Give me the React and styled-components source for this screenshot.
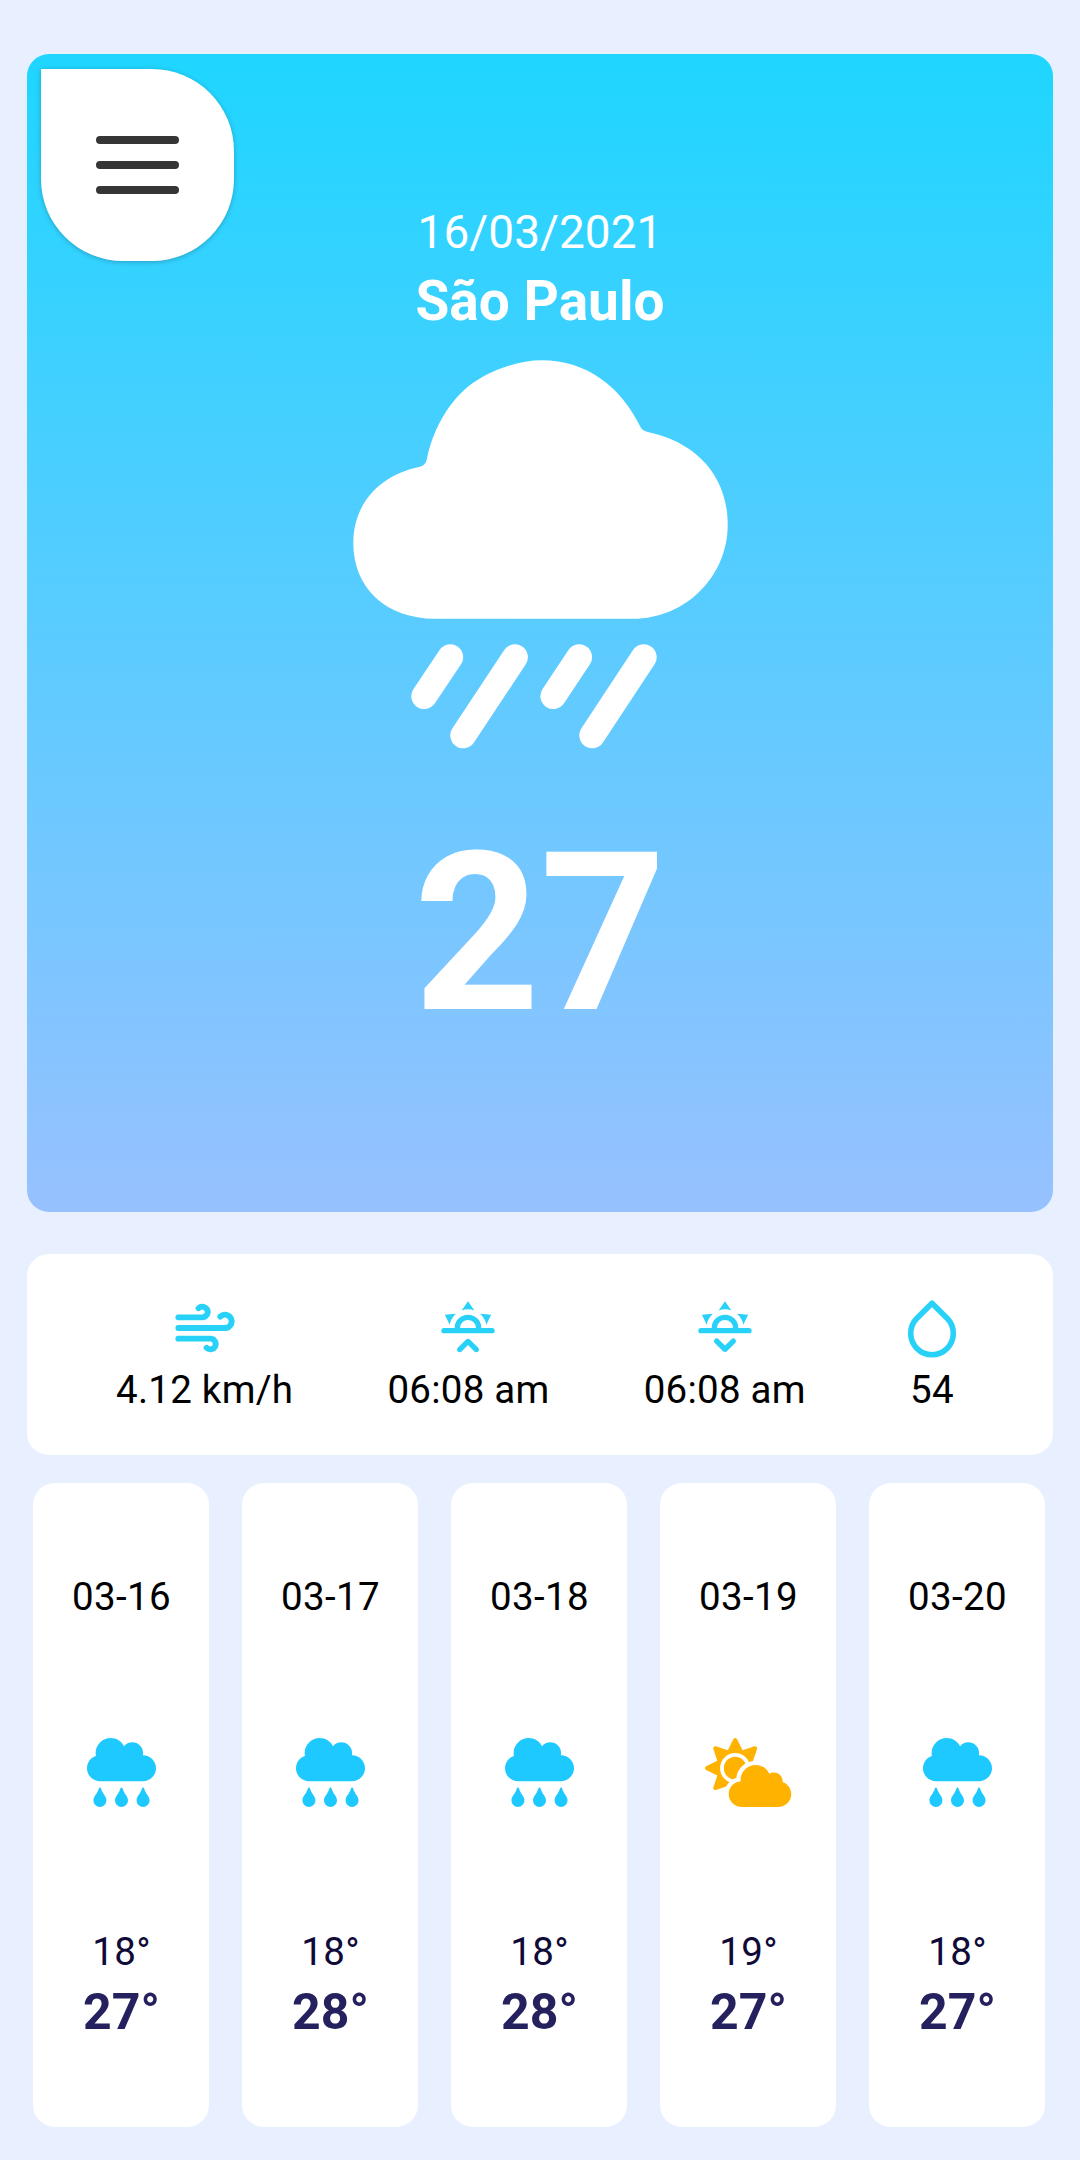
import React from "react";
import styled, { createGlobalStyle } from "styled-components";
import { FiWind, FiDroplet } from "react-icons/fi";
import { FaCloudRain, FaCloudSun } from "react-icons/fa";

const GlobalStyle = createGlobalStyle`
  * { box-sizing: border-box; }
  body {
    margin: 0;
    background: #e8f0ff;
    font-family: Roboto, "Liberation Sans", sans-serif;
  }
`;

const Screen = styled.main`
  display: flex;
  flex-direction: column;
  width: 1080px;
  height: 2160px;
  padding: 54px 27px 0;
  background: #e8f0ff;
  overflow: hidden;
`;

const Hero = styled.section`
  position: relative;
  display: flex;
  flex-direction: column;
  align-items: center;
  flex: none;
  height: 1158px;
  padding-top: 148px;
  border-radius: 22px;
  background: linear-gradient(180deg, #1ed6ff 0%, #97c1ff 100%);
  color: #fff;
`;

const MenuButton = styled.button`
  position: absolute;
  top: 15px;
  left: 14px;
  display: flex;
  flex-direction: column;
  align-items: center;
  justify-content: center;
  gap: 16.5px;
  width: 193px;
  height: 192px;
  padding: 0;
  border: 0;
  border-radius: 0 82px 82px 82px;
  background: #fff;
  box-shadow: 0 1px 5px rgba(0, 0, 0, 0.24);
`;

const MenuBar = styled.span`
  width: 82.5px;
  height: 8.2px;
  border-radius: 5px;
  background: #353535;
`;

const HeroDate = styled.span`
  font-size: 46px;
  line-height: 60px;
`;

const City = styled.strong`
  margin-bottom: 8px;
  font-size: 55px;
  font-weight: 700;
  line-height: 78px;
`;

const Temperature = styled.strong`
  margin-top: 43px;
  font-size: 220px;
  font-weight: 700;
  line-height: 260px;
`;

const Conditions = styled.section`
  display: flex;
  flex: none;
  justify-content: space-between;
  height: 201px;
  margin-top: 42px;
  padding: 42px 89px 0;
  border-radius: 22px;
  background: #fff;
`;

const Condition = styled.div`
  display: flex;
  flex-direction: column;
  align-items: center;
  gap: 7px;
  color: #000;
  font-size: 38.5px;
  letter-spacing: 0.25px;
  line-height: 46px;

  svg {
    color: #27d1f8;
  }
`;

const Forecast = styled.section`
  display: flex;
  flex: none;
  gap: 33px;
  margin: 28px 6px 0;
`;

const DayCard = styled.article`
  display: flex;
  flex-direction: column;
  align-items: center;
  width: 176px;
  height: 644px;
  padding: 91px 0 0 1px;
  border-radius: 22px;
  background: #fff;
`;

const DayDate = styled.span`
  color: #000;
  font-size: 38.5px;
  letter-spacing: 0.35px;
  line-height: 46px;
`;

const DayIcon = styled.div`
  display: flex;
  margin: 118px 0 117px;
  color: ${(p) => p.$color};

  svg {
    width: ${(p) => p.$width}px;
    height: 69px;
  }
`;

const Low = styled.span`
  color: #0f0a38;
  font-size: 38.5px;
  letter-spacing: 0.35px;
  line-height: 56px;
`;

const High = styled.strong`
  color: #25205e;
  font-size: 50px;
  font-weight: 700;
  line-height: 64px;
`;

const HORIZON =
  "M3,12H7A5,5 0 0,1 12,7A5,5 0 0,1 17,12H21A1,1 0 0,1 22,13A1,1 0 0,1 21,14H3A1,1 0 0,1 2,13A1,1 0 0,1 3,12M15,12A3,3 0 0,0 12,9A3,3 0 0,0 9,12H15M12,2L14.39,5.42C13.65,5.15 12.84,5 12,5C11.16,5 10.35,5.15 9.61,5.42L12,2M3.34,7L7.5,6.65C6.9,7.16 6.36,7.78 5.94,8.5C5.5,9.24 5.25,10 5.11,10.79L3.34,7M20.65,7L18.88,10.79C18.74,10 18.47,9.23 18.05,8.5C17.63,7.78 17.1,7.15 16.5,6.64L20.65,7";
const ARROW_UP =
  "M12.71,16.3L15.82,19.41C16.21,19.8 16.21,20.43 15.82,20.82C15.43,21.21 14.8,21.21 14.41,20.82L12,18.41L9.59,20.82C9.2,21.21 8.57,21.21 8.18,20.82C7.79,20.43 7.79,19.8 8.18,19.41L11.29,16.3C11.5,16.1 11.74,16 12,16C12.26,16 12.5,16.1 12.71,16.3Z";
const ARROW_DOWN =
  "M12.71,20.71L15.82,17.6C16.21,17.21 16.21,16.57 15.82,16.18C15.43,15.79 14.8,15.79 14.41,16.18L12,18.59L9.59,16.18C9.2,15.79 8.57,15.79 8.18,16.18C7.79,16.57 7.79,17.21 8.18,17.6L11.29,20.71C11.5,20.9 11.74,21 12,21C12.26,21 12.5,20.9 12.71,20.71Z";

function SunHorizon({ size, arrow }) {
  return (
    <svg width={size} height={size} viewBox="0 0 24 24" fill="currentColor">
      <path d={HORIZON} />
      <path d={arrow} />
    </svg>
  );
}

function HeavyRain({ size }) {
  return (
    <svg width={size} height={size} viewBox="0 0 412.5 412.5" fill="currentColor">
      <path d="M86 118.7Q91.5 117 92.7 112C98.5 83 113 56.5 133 39.5C154 22.5 184 12.2 207.7 12.2C253 12.2 287 39 306.5 79Q308.5 83 314 84C361 94 393.7 126.5 393.7 176.8C393.7 229 351 270.8 299.3 270.8H101C52 270.8 19.3 240 19.3 195.3C19.3 155 46 127 86 118.7Z" />
      <path
        d="M116.3 309.2L90.2 348.2M181 309.2L129.2 387.4M245.2 309.2L219.3 348.2M309.8 309.2L258.2 387.4"
        fill="none"
        stroke="currentColor"
        strokeWidth="25.8"
        strokeLinecap="round"
      />
    </svg>
  );
}

const conditions = [
  { icon: <FiWind size={64} strokeWidth={2.2} />, text: "4.12 km/h" },
  { icon: <SunHorizon size={64} arrow={ARROW_UP} />, text: "06:08 am" },
  { icon: <SunHorizon size={64} arrow={ARROW_DOWN} />, text: "06:08 am" },
  { icon: <FiDroplet size={64} strokeWidth={2.1} />, text: "54" },
];

const rain = { Icon: FaCloudRain, width: 69, color: "#1ec9ff" };
const partlySunny = { Icon: FaCloudSun, width: 86.25, color: "#ffb300" };

const days = [
  { date: "03-16", low: 18, high: 27, sky: rain },
  { date: "03-17", low: 18, high: 28, sky: rain },
  { date: "03-18", low: 18, high: 28, sky: rain },
  { date: "03-19", low: 19, high: 27, sky: partlySunny },
  { date: "03-20", low: 18, high: 27, sky: rain },
];

export default function App() {
  return (
    <Screen>
      <GlobalStyle />
      <Hero>
        <MenuButton aria-label="Menu">
          <MenuBar />
          <MenuBar />
          <MenuBar />
        </MenuButton>
        <HeroDate>16/03/2021</HeroDate>
        <City>São Paulo</City>
        <HeavyRain size={412.5} />
        <Temperature>27</Temperature>
      </Hero>
      <Conditions>
        {conditions.map((c, i) => (
          <Condition key={i}>
            {c.icon}
            <span>{c.text}</span>
          </Condition>
        ))}
      </Conditions>
      <Forecast>
        {days.map(({ date, low, high, sky }) => (
          <DayCard key={date}>
            <DayDate>{date}</DayDate>
            <DayIcon $color={sky.color} $width={sky.width}>
              <sky.Icon />
            </DayIcon>
            <Low>{low}°</Low>
            <High>{high}°</High>
          </DayCard>
        ))}
      </Forecast>
    </Screen>
  );
}
